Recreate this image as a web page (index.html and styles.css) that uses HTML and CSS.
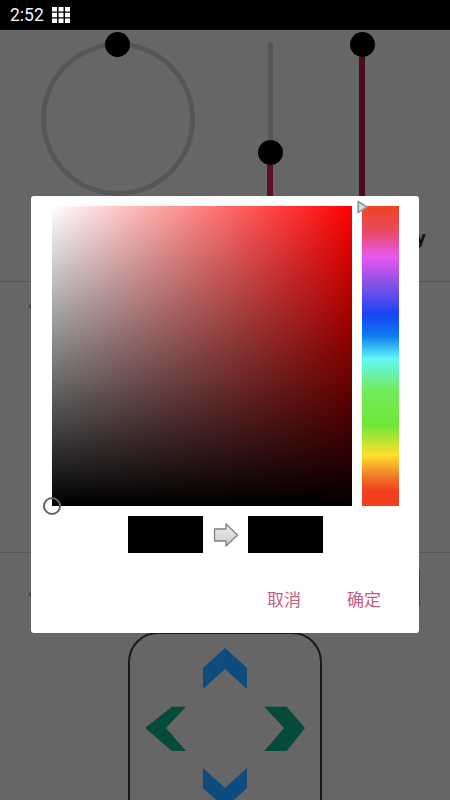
FILE: index.html
```html
<!DOCTYPE html>
<html lang="zh">
<head>
<meta charset="utf-8">
<title>Color picker</title>
<link rel="stylesheet" href="styles.css">
</head>
<body>
<div class="screen">
  <header class="status">
    <span class="time">2:52</span>
    <svg class="grid-icon" viewBox="0 0 18 16" width="18" height="16"><path d="M0 0h5v4.600H0zM6.500 0h5v4.600h-5zM13 0h5v4.600h-5zM0 5.700h5v4.600H0zM6.500 5.700h5v4.600h-5zM13 5.700h5v4.600h-5zM0 11.400h5V16H0zM6.500 11.400h5V16h-5zM13 11.400h5V16h-5z" fill="#fff"/></svg>
  </header>
  <section class="controls">
    <div class="ring"><span class="knob ring-knob"></span></div>
    <div class="slider slider-a">
      <span class="track-off"></span><span class="knob"></span><span class="track-on"></span>
    </div>
    <div class="slider slider-b">
      <span class="knob"></span><span class="track-on"></span>
    </div>
    <span class="label">y</span>
  </section>
  <section class="middle"><span class="mark mark-a"></span></section>
  <section class="pad-area">
    <span class="mark mark-b"></span>
    <span class="peek"></span>
    <div class="pad">
      <svg class="pad-arrows" viewBox="0 0 194 170" width="194" height="170">
        <path class="up" d="M97 16 119 36V57L97 37 75 57V36Z"/>
        <path class="side" d="M17 96 44 74.700H58L38 96 58 119H44Z"/>
        <path class="side" d="M177 96 158.700 74.700H136.300L156 96 136.300 119H158.700Z"/>
        <path class="up" d="M75 136 97 156 119 136V156L97 176 75 156Z"/>
      </svg>
    </div>
  </section>

  <div class="dialog">
    <div class="pickers">
      <div class="sv"><span class="sv-cursor"></span></div>
      <div class="hue">
        <svg class="hue-marker" viewBox="0 0 11 14" width="11" height="14"><path d="M1.200 1.500 9.800 7 1.200 12.500Z" fill="#ddd" stroke="#999" stroke-width="1.800" stroke-linejoin="round"/></svg>
      </div>
    </div>
    <div class="compare">
      <span class="swatch"></span>
      <svg class="compare-arrow" viewBox="0 0 26 26" width="26" height="26"><defs><linearGradient id="arrowFill" x1="0" y1="0" x2="0" y2="1"><stop offset="0" stop-color="#eee"/><stop offset="1" stop-color="#ccc"/></linearGradient></defs><path d="M1.500 7H13V2L24.500 13 13 24V19H1.500Z" fill="url(#arrowFill)" stroke="#808080" stroke-width="1.300" stroke-linejoin="round"/></svg>
      <span class="swatch"></span>
    </div>
    <div class="actions">
      <span class="action">取消</span>
      <span class="action">确定</span>
    </div>
  </div>
</div>
</body>
</html>
```

FILE: styles.css
```css
* { box-sizing: border-box; }
html, body { margin: 0; padding: 0; }
body { width: 450px; height: 800px; overflow: hidden; background: #666; }
.screen {
  position: relative;
  width: 450px;
  height: 800px;
  overflow: hidden;
  display: flex;
  flex-direction: column;
  background: #666;
  font-family: Roboto, "Noto Sans CJK SC", sans-serif;
}
.status {
  flex: none;
  height: 30px;
  background: #000;
  display: flex;
  align-items: center;
  padding-left: 10px;
  gap: 8.500px;
}
.time { color: #f4f4f4; font-size: 17.500px; line-height: 30px; }
.grid-icon { display: block; }

.controls {
  flex: none;
  position: relative;
  height: 252px;
  border-bottom: 1px solid #555;
  display: flex;
  align-items: flex-start;
  padding: 12px 0 0 41px;
}
.knob {
  display: block;
  flex: none;
  width: 25px;
  height: 25px;
  border-radius: 50%;
  background: #000;
}
.ring {
  position: relative;
  flex: none;
  width: 154px;
  height: 154px;
  border: 5px solid #565656;
  border-radius: 50%;
}
.ring-knob { position: absolute; left: 59px; top: -15px; }
.slider {
  flex: none;
  width: 25px;
  height: 220px;
  display: flex;
  flex-direction: column;
  align-items: center;
}
.slider-a { margin-left: 62.500px; }
.slider-b { margin-left: 67px; margin-top: -10px; }
.track-off { flex: none; width: 5px; height: 98px; background: #565656; border-radius: 3px 3px 0 0; }
.track-on { flex: 1; width: 6px; background: #4c0a22; }
.slider-a .track-on { background: #5a0f28; }
.label {
  position: absolute;
  left: 416px;
  top: 197px;
  font-size: 19px;
  font-weight: 700;
  line-height: 22px;
  color: #111;
}

.middle { flex: none; position: relative; height: 271px; border-bottom: 1px solid #555; }
.mark { position: absolute; left: 29px; width: 2px; height: 3px; background: #444; }
.mark-a { top: 23px; }
.mark-b { top: 40px; }
.peek { position: absolute; left: 419px; top: 16px; width: 1px; height: 37px; background: #4a3a40; }

.pad-area { flex: 1; position: relative; display: flex; justify-content: center; align-items: flex-start; }
.pad {
  flex: none;
  width: 194px;
  height: 300px;
  margin-top: 79px;
  border: 2px solid #1a1a1a;
  border-radius: 30px;
}
.pad-arrows { display: block; margin: -2px; overflow: visible; }
.up { fill: #0f4c7e; }
.side { fill: #064a3c; }

.dialog {
  position: absolute;
  left: 31px;
  top: 196px;
  width: 388px;
  height: 437px;
  background: #fff;
  border-radius: 3px;
  padding: 10px 20px 0 20.500px;
  display: flex;
  flex-direction: column;
}
.pickers { display: flex; gap: 10px; flex: none; height: 300px; }
.sv {
  position: relative;
  flex: none;
  width: 300px;
  height: 300px;
  background:
    linear-gradient(to bottom, rgba(0,0,0,0), #000),
    linear-gradient(to right, #fff, #f00);
}
.sv-cursor {
  position: absolute;
  left: -9px;
  bottom: -9px;
  width: 18px;
  height: 18px;
  border: 2px solid #666;
  border-radius: 50%;
}
.hue {
  position: relative;
  flex: none;
  width: 37px;
  height: 300px;
  background: linear-gradient(to bottom,
    #f0431f 0%, #e84a68 9%, #e858f0 17%, #7a50e8 27%, #1a44f4 36%, #0a78f0 43%,
    #60f8f8 51%, #72ec60 61%, #70e636 73%, #ffe02e 83%, #f07a2a 90%, #f0401f 95%, #f0401f 100%);
}
.hue-marker { position: absolute; left: -5px; top: -6px; }
.compare {
  flex: none;
  display: flex;
  align-items: center;
  margin: 10px 0 0 76.500px;
  height: 37px;
}
.swatch { display: block; flex: none; width: 75px; height: 37px; background: #000; }
.compare-arrow { flex: none; margin: 0 9.500px; }
.actions {
  flex: none;
  display: flex;
  gap: 46px;
  justify-content: flex-end;
  margin-top: 36px;
  padding-right: 18px;
}
.action { font-size: 17px; line-height: 20px; color: #c2607f; font-family: "Noto Sans CJK SC", sans-serif; }
```
